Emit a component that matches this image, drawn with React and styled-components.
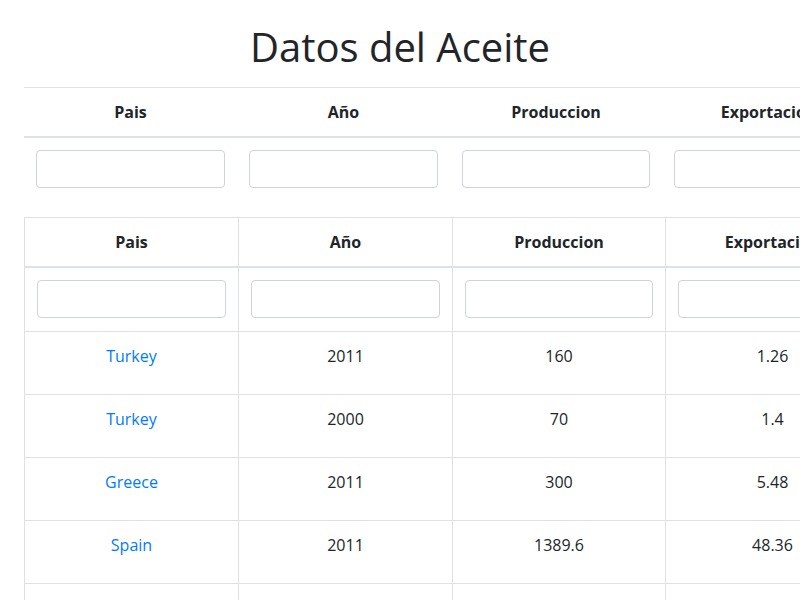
import React from "react";
import styled, { createGlobalStyle } from "styled-components";

const GlobalStyle = createGlobalStyle`
  html, body {
    margin: 0;
    padding: 0;
    overflow: hidden;
    background: #fff;
  }
  body {
    font-family: "Open Sans", "Noto Sans", sans-serif;
    font-size: 16px;
    line-height: 1.5;
    color: #212529;
  }
  * { box-sizing: border-box; }
`;

const Container = styled.div`
  padding: 0 24px;
  width: 800px;
`;

const Title = styled.h1`
  margin: 23px 0 16px;
  font-size: 40px;
  font-weight: 500;
  line-height: 1.2;
  text-align: center;
  color: #212529;
`;

const Table = styled.table`
  border-collapse: collapse;
  table-layout: fixed;
  width: ${(p) => p.$width}px;
  margin-bottom: ${(p) => p.$mb}px;
  color: #212529;
  ${(p) => (p.$bordered ? "border: 1px solid #dee2e6;" : "")}
`;

const Col = styled.col`
  width: ${(p) => p.$w}px;
`;

const Th = styled.th`
  padding: 12px;
  font-weight: 700;
  text-align: center;
  vertical-align: bottom;
  border-top: 1px solid #dee2e6;
  border-bottom: 2px solid #dee2e6;
  ${(p) => (p.$bordered ? "border-left: 1px solid #dee2e6; border-right: 1px solid #dee2e6;" : "")}
  white-space: nowrap;
`;

const Td = styled.td`
  padding: 12px 12px ${(p) => (p.$padBottom ? p.$padBottom : 12)}px;
  text-align: center;
  vertical-align: top;
  border-top: 1px solid #dee2e6;
  ${(p) => (p.$bordered ? "border: 1px solid #dee2e6;" : "")}
  ${(p) => (p.$noTop ? "border-top: none;" : "")}
`;

const FilterInput = styled.input`
  display: block;
  width: 100%;
  height: 38px;
  padding: 6px 12px;
  font-family: inherit;
  font-size: 16px;
  color: #495057;
  background: #fff;
  border: 1px solid #ced4da;
  border-radius: 4px;
  outline: none;
`;

const Link = styled.a`
  color: #007bff;
  text-decoration: none;
`;

const Actions = styled.div`
  display: flex;
  gap: 8px;
  justify-content: center;
`;

const Button = styled.button`
  height: 38px;
  padding: 6px 12px;
  font-family: inherit;
  font-size: 16px;
  line-height: 1.5;
  color: #fff;
  border: 1px solid ${(p) => p.$color};
  background: ${(p) => p.$color};
  border-radius: 4px;
`;

const columns = ["Pais", "Año", "Produccion", "Exportacion", "Importacion", "Acciones"];

const rows = [
  { pais: "Turkey", anio: 2011, prod: "160", exp: "1.26", imp: "0.02" },
  { pais: "Turkey", anio: 2000, prod: "70", exp: "1.4", imp: "0.01" },
  { pais: "Greece", anio: 2011, prod: "300", exp: "5.48", imp: "0.3" },
  { pais: "Spain", anio: 2011, prod: "1389.6", exp: "48.36", imp: "4.1" },
  { pais: "Italy", anio: 2011, prod: "450", exp: "20.1", imp: "55.2" },
];

const topWidths = [213, 213, 212, 213, 213, 213];
const mainWidths = [214, 214, 213, 214, 214, 214];

function FilterRow({ bordered }) {
  return (
    <tr>
      {columns.map((c, i) => (
        <Td key={c} $bordered={bordered} $noTop={!bordered} $padBottom={bordered ? 13 : 12}>
          {i < 5 ? <FilterInput type="text" aria-label={c} /> : null}
        </Td>
      ))}
    </tr>
  );
}

export default function App() {
  return (
    <>
      <GlobalStyle />
      <Container>
        <Title>Datos del Aceite</Title>

        <Table $width={1277} $mb={17}>
          <colgroup>
            {topWidths.map((w, i) => (
              <Col key={i} $w={w} />
            ))}
          </colgroup>
          <thead>
            <tr>
              {columns.map((c) => (
                <Th key={c}>{c}</Th>
              ))}
            </tr>
          </thead>
          <tbody>
            <FilterRow />
          </tbody>
        </Table>

        <Table $width={1283} $mb={16} $bordered>
          <colgroup>
            {mainWidths.map((w, i) => (
              <Col key={i} $w={w} />
            ))}
          </colgroup>
          <thead>
            <tr>
              {columns.map((c) => (
                <Th key={c} $bordered>
                  {c}
                </Th>
              ))}
            </tr>
          </thead>
          <tbody>
            <FilterRow bordered />
            {rows.map((r, i) => (
              <tr key={i}>
                <Td $bordered>
                  <Link href="#">{r.pais}</Link>
                </Td>
                <Td $bordered>{r.anio}</Td>
                <Td $bordered>{r.prod}</Td>
                <Td $bordered>{r.exp}</Td>
                <Td $bordered>{r.imp}</Td>
                <Td $bordered>
                  <Actions>
                    <Button $color="#ffc107">Editar</Button>
                    <Button $color="#dc3545">Borrar</Button>
                  </Actions>
                </Td>
              </tr>
            ))}
          </tbody>
        </Table>
      </Container>
    </>
  );
}
